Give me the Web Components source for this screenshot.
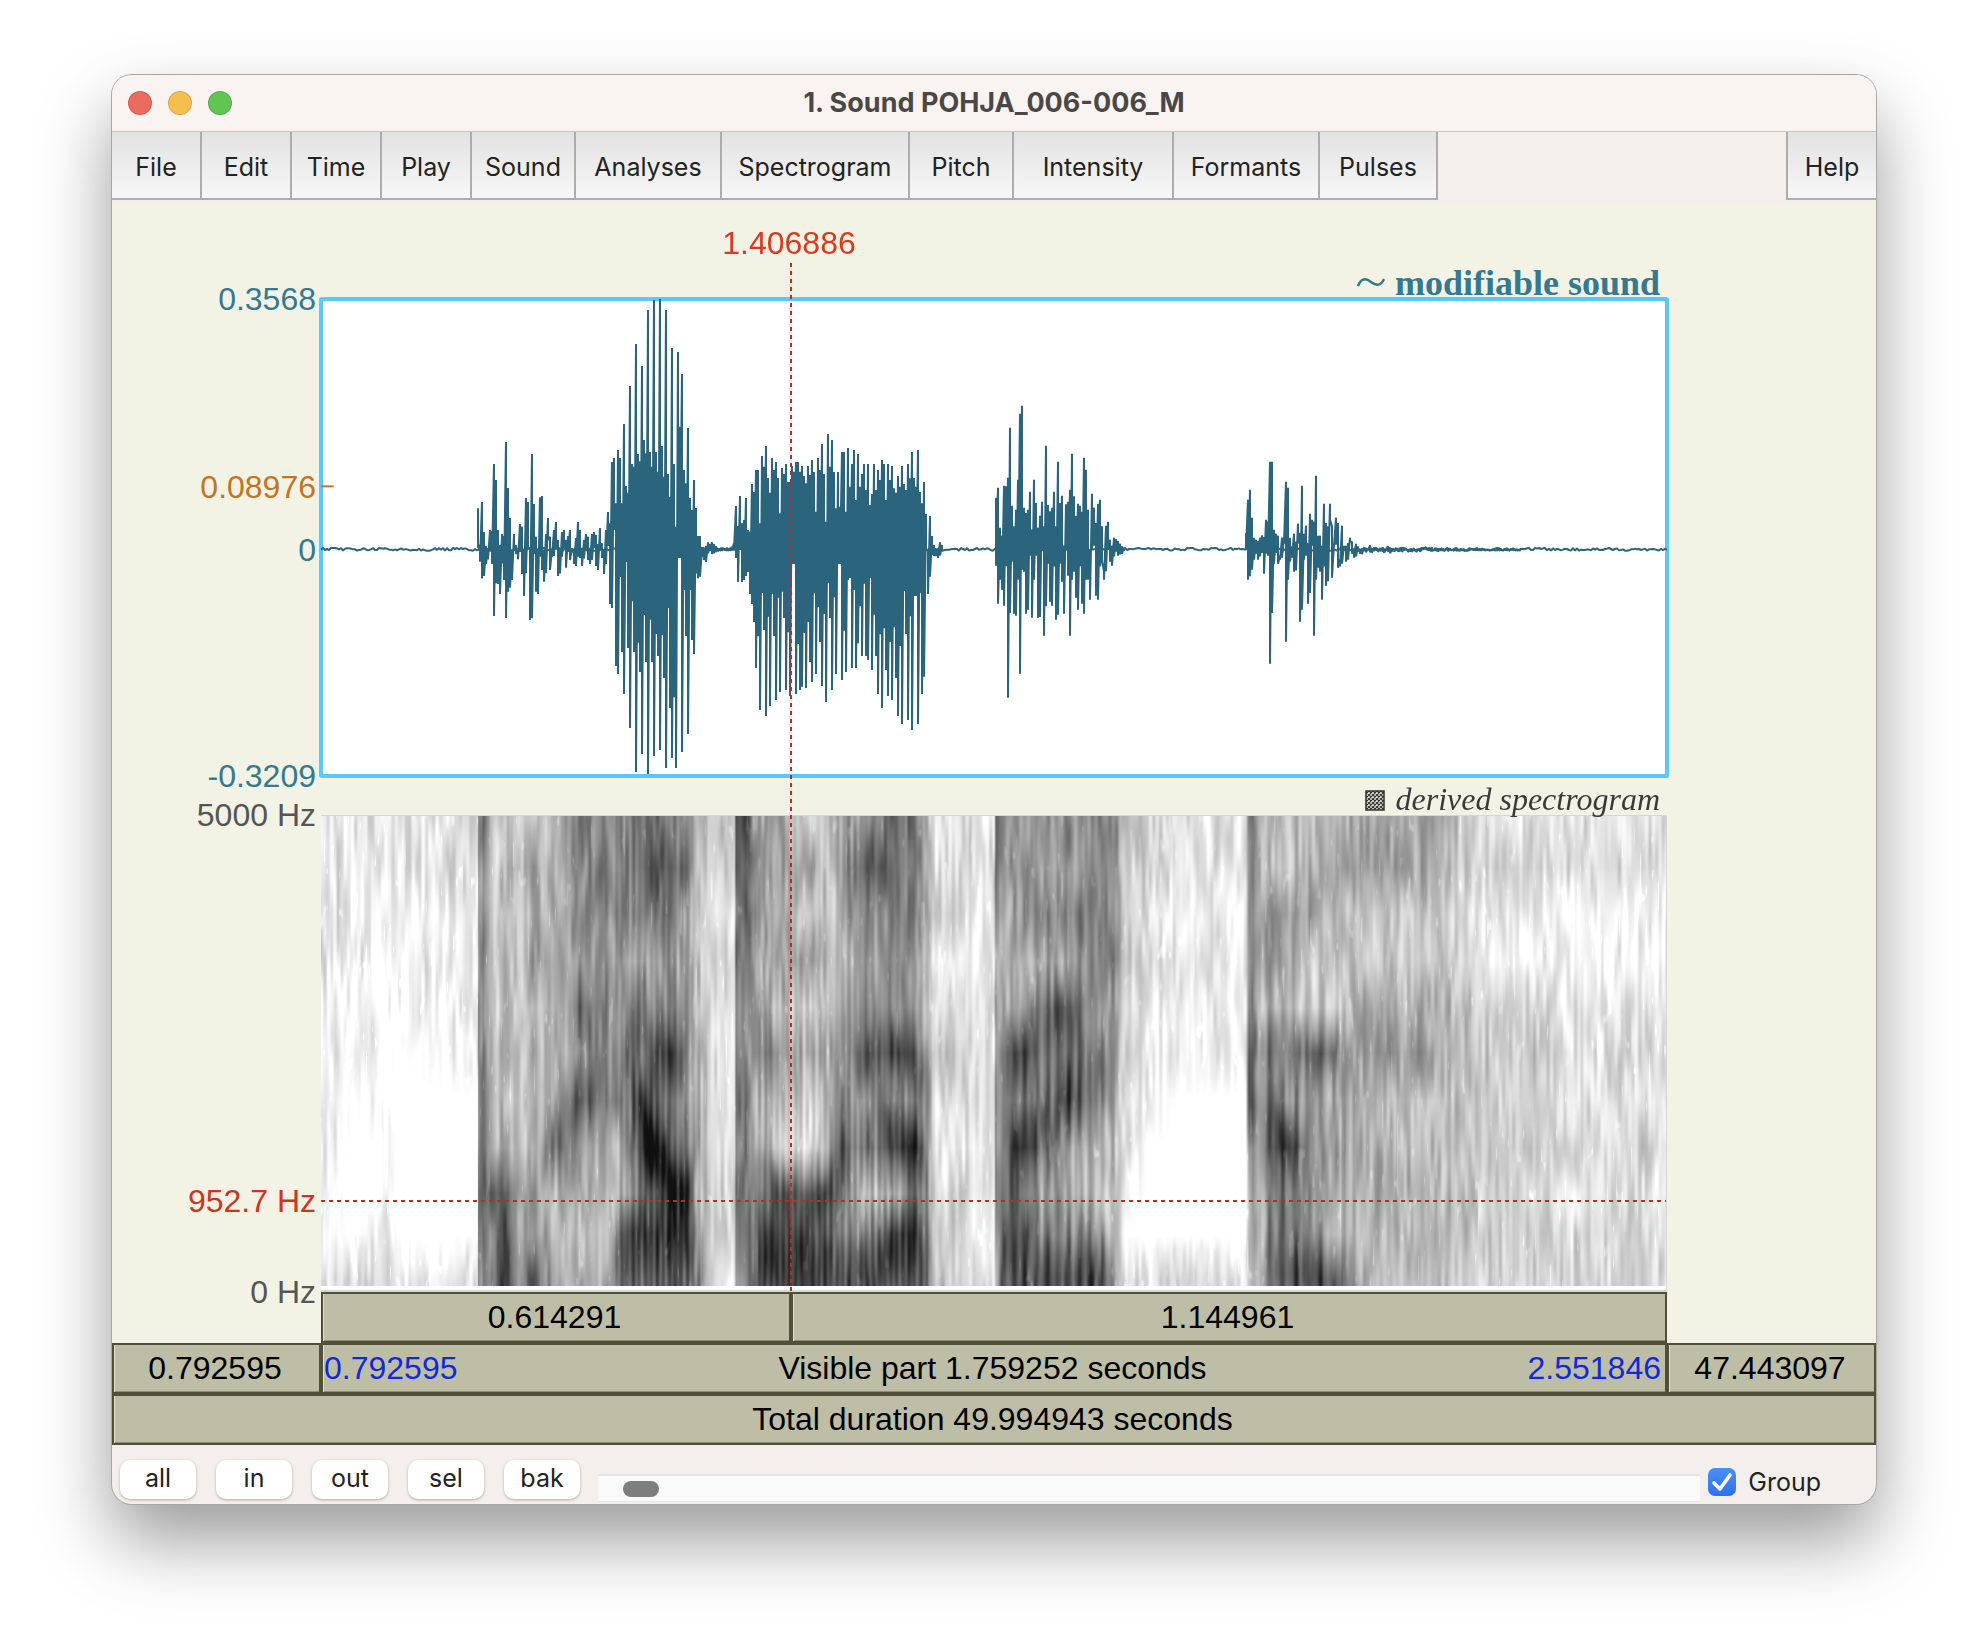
<!DOCTYPE html>
<html lang="en">
<head>
<meta charset="utf-8">
<title>1. Sound POHJA_006-006_M</title>
<style>
body{
    margin: 0;
    padding: 75px 112px 148px;
    background-color: white;
    font-family: Inter, "Liberation Sans", sans-serif;
}
</style>
</head>
<body>
<editor-window name="1. Sound POHJA_006-006_M">
    <menu-bar slot="menu">
        <menu-button style="--width:90px">File</menu-button>
        <menu-button style="--width:90px">Edit</menu-button>
        <menu-button style="--width:90px">Time</menu-button>
        <menu-button style="--width:90px">Play</menu-button>
        <menu-button style="--width:104px">Sound</menu-button>
        <menu-button style="--width:146px">Analyses</menu-button>
        <menu-button style="--width:188px">Spectrogram</menu-button>
        <menu-button style="--width:104px">Pitch</menu-button>
        <menu-button style="--width:160px">Intensity</menu-button>
        <menu-button style="--width:146px">Formants</menu-button>
        <menu-button style="--width:118px">Pulses</menu-button>
        <menu-button slot="help" last style="--width:90px">Help</menu-button>
    </menu-bar>
    <sound-area></sound-area>
    <control-bar slot="controls"></control-bar>
</editor-window>

<script>
function makeTemplate(html){
    const template=document.createElement('template');
    template.innerHTML=html;
    return template;
}

// Base class, clones the template in an open shadow root
class BaseElement extends HTMLElement{
    constructor(template){
        super();
        this.attachShadow({mode:'open'});
        this.shadowRoot.appendChild(template.content.cloneNode(true))
    }
}

// WINDOW
const windowTemplate=makeTemplate(`
<style>
:host{
    display: block;
    overflow: hidden;
    border-radius: 20px;
    background-color: #f4efed;
    box-shadow: 0 0 0 1px #a9a7a6, 0 36px 72px rgba(0,0,0,0.4);
}
header{
    display: grid;
    grid-template-columns: 1fr auto 1fr;
    align-items: center;
    height: 57px;
    background-color: #f9f4f1;
    border-bottom: 1px solid #c8c4c2;
    box-sizing: border-box;
}
.lights{
    display: flex;
    gap: 16px;
    padding-left: 16px;
}
.lights button{
    width: 24px;
    height: 24px;
    padding: 0;
    border: 1px solid rgba(0,0,0,0.12);
    border-radius: 50%;
}
.close{ background-color: #ec6a5e; }
.minimize{ background-color: #f4bf4f; }
.zoom{ background-color: #61c554; }
h1{
    margin: 0;
    font-size: 27px;
    line-height: 32px;
    font-weight: 700;
    color: #4a4847;
}
</style>
<header>
    <div class="lights">
        <button class="close" aria-label="Close"></button>
        <button class="minimize" aria-label="Minimize"></button>
        <button class="zoom" aria-label="Zoom"></button>
    </div>
    <h1></h1>
</header>
<slot name="menu"></slot>
<slot></slot>
<slot name="controls"></slot>
`)

class EditorWindow extends BaseElement{
    constructor(){
        super(windowTemplate);
        this.shadowRoot.querySelector('h1').innerText=this.getAttribute('name')
    }
}

// MENU
const menuBarTemplate=makeTemplate(`
<style>
:host{
    display: flex;
    justify-content: space-between;
    padding-bottom: 4px;
}
nav{
    display: flex;
}
</style>
<nav><slot></slot></nav>
<nav><slot name="help"></slot></nav>
`)

class MenuBar extends BaseElement{
    constructor(){
        super(menuBarTemplate);
    }
}

const menuButtonTemplate=makeTemplate(`
<style>
:host{
    display: block;
    width: var(--width);
}
button{
    box-sizing: border-box;
    width: 100%;
    height: 68px;
    padding: 3px 0 0;
    border: 0 solid #adadad;
    border-width: 0 2px 2px 0;
    background: linear-gradient(#e2e2e2,#f7f7f7);
    font-family: inherit;
    font-size: 25px;
    color: #222;
    white-space: nowrap;
}
:host([last]) button{
    border-width: 0 0 2px 2px;
}
</style>
<button><slot></slot></button>
`)

class MenuButton extends BaseElement{
    constructor(){
        super(menuButtonTemplate);
    }
}

// VALUE AXIS, the gaps between the labels follow the values
const axisTemplate=makeTemplate(`
<style>
:host{
    display: flex;
    flex-direction: column;
    padding-right: 5px;
}
span{
    display: flex;
    align-items: center;
    justify-content: flex-end;
    height: 0;
    line-height: 32px;
    white-space: nowrap;
}
</style>
`)

class ValueAxis extends BaseElement{
    constructor(){
        super(axisTemplate);
    }
    connectedCallback(){
        const labels=this.getAttribute('labels').split(',')
        const colors=this.getAttribute('colors').split(',')
        labels.forEach((text,i)=>{
            if(i>0){
                const gap=document.createElement('div')
                gap.style.flex=`${Math.abs(parseFloat(labels[i-1])-parseFloat(text))*1000} 0 0px`
                this.shadowRoot.appendChild(gap)
            }
            const label=document.createElement('span')
            label.textContent=text
            label.style.color=colors[i]
            this.shadowRoot.appendChild(label)
        })
    }
}

// WAVEFORM
// Every burst is a list of top,bottom pairs, one for each column of the plot
const STEP=6;
const ZERO=752;
const bursts=[
{x:471,zero:779,data:`655,775 765,815 636,865 726,858 768,822 774,808 720,785 723,822 522,978 570,880 720,882 765,912
732,820 738,870 456,984 594,905 684,893 778,870 732,780 765,792 780,808 702,786 710,852 778,918 624,850 636,774 774,990
492,985 642,792 740,905 775,912 622,800 618,840 779,875 732,850 684,750 740,840 778,800 720,798 696,775 750,858 779,850
726,800 720,774 750,833 738,786 720,810 774,786 779,822 744,828 696,800 720,804 774,828 750,805 732,780 740,810 774,822
732,810 726,774 735,828 762,840 714,778 760,804 779,852 720,822 666,768 700,942 516,954 504,720 640,1128 480,1152
504,735 640,1086 402,1212 588,760 608,1074 288,1314 522,860 530,1086 162,1446 492,930 514,1146 228,1392 450,880
490,1116 60,1452 486,930 530,1116 30,1398 486,960 545,1098 24,1380 468,880 560,1164 60,1434 552,940 620,1254 174,1404
522,950 710,1434 186,804 410,804 252,1386 540,880 580,1038 414,1332 624,880 660,1050 570,1092 654,850 738,865 738,860
776,800 776,810 768,816 757,790 762,782 757,792 762,790 768,786 774,784 776,782 777,782 775,781 776,782 777,783 774,781
770,780 760,779 648,804 708,876 618,780 700,876 690,870 624,858 720,846 725,912 582,942 606,996 540,1134
540,900 700,1260 498,905 530,1020 468,1278 564,900 608,1248 504,910 540,1038 516,1230 564,910 670,1206 534,905 552,984
522,1200 576,910 576,1218 528,822 545,822 516,1212 516,890 545,1200 528,1190 558,876 580,1194 528,900 555,1116
510,1176 546,900 665,1152 504,890 540,1056 462,1188 552,880 695,1236 432,880 530,984 450,1200 546,890 655,1152 546,822
650,822 486,1170 486,880 665,1146 474,870 590,864 522,1134 480,890 630,1134 492,1060 590,846 552,1098 522,860 600,1098
522,1110 645,860 612,1140 522,880 600,1098 540,1212 570,890 510,1254 522,880 630,1140 522,1218 570,900 528,1230
595,860 608,1164 558,1278 590,900 528,1302 582,900 600,1032 522,1290 565,900 486,1320 564,918 590,918 480,1302 606,880
640,1212 576,1160 672,780 780,912 678,860 738,795 765,798 776,798 779,804 757,796 765,785`},
{x:2025,zero:510,data:`354,558 324,672 444,600 468,630 318,678 320,560 294,954 144,700 378,546 440,702 390,708 300,600
102,882 78,570 384,576 400,702 390,690 336,528 450,714 300,600 370,528 444,714 408,712 366,510 440,768 198,680 376,552
395,666 384,678 336,560 440,720 246,705 370,552 348,606 498,702 374,510 366,588 330,768 222,600 350,576 408,654 372,690
378,560 396,672 234,702 270,600 390,600 510,660 342,510 384,498 430,648 372,660 360,560 440,545 575,600 438,575 426,510
480,546 498,558 474,530 478,516 484,528 492,524 500,522 504,514`},
{x:2775,zero:510,data:`460,510 360,600 330,590 414,570 474,540 480,522 484,540 474,530 467,520 472,582 420,522 426,528
246,852 246,700 450,552 462,520 468,552 528,540 474,534 474,492 306,786 324,600 474,546 500,534 462,576 486,572 432,492
460,726 318,690 462,540 438,528 490,672 402,640 420,498 426,768 288,600 468,564 468,576 498,660 372,560 430,618 440,605
372,420 440,594 492,500 414,495 430,564 540,560 438,552 498,504 500,546 490,540 474,486 486,522 510,534 492,530`}
]

function seeded(seed){
    return ()=>{
        seed=(seed*1103515245+12345)&0x7fffffff
        return seed/0x7fffffff
    }
}

const waveTemplate=makeTemplate(`
<style>
:host{
    display: block;
    background-color: white;
    border-radius: 1px;
    box-shadow: 0 0 0 2px #5bc8fb, inset 0 0 0 2px #5bc8fb;
}
svg{
    display: block;
    width: 100%;
    height: 100%;
}
path{
    fill: none;
    stroke: #2b647d;
    stroke-width: 6;
    stroke-linejoin: bevel;
}
.mark{ stroke: #c4741f; }
</style>
<svg viewBox="0 0 4038 1431" preserveAspectRatio="none" aria-hidden="true">
    <path class="mark" d="M0 562H38"/>
    <path class="noise"/>
    <path class="bars"/>
</svg>
`)

class WaveForm extends BaseElement{
    constructor(){
        super(waveTemplate);
    }
    connectedCallback(){
        const random=seeded(7)
        let bars=''
        bursts.forEach(burst=>{
            const pairs=burst.data.trim().split(/\s+/).map(pair=>pair.split(',').map(Number))
            pairs.forEach(([top,bottom],i)=>{
                // columns between two deep pulses reach part of the way down
                const around=Math.min(pairs[i-1]?.[1]??0,pairs[i+1]?.[1]??0)
                if(around>1000&&bottom<around) bottom=Math.round(bottom+(around-bottom)*0.6*random())
                bars+=`${i?'L':'M'}${burst.x+i*STEP} ${top-burst.zero+ZERO}V${bottom-burst.zero+ZERO}`
            })
        })
        // soft tail after the last burst
        for(let x=3111;x<3600;x+=STEP){
            const size=22*Math.exp((3111-x)/320)
            bars+=`L${x} ${Math.round(ZERO+4-size*random())}V${Math.round(ZERO-3+size*random()*0.9)}`
        }
        let noise=`M0 ${ZERO}`
        for(let x=STEP;x<=4038;x+=STEP){
            noise+=`L${x} ${Math.round(ZERO-1+(random()-0.5)*9)}`
        }
        this.shadowRoot.querySelector('.bars').setAttribute('d',bars)
        this.shadowRoot.querySelector('.noise').setAttribute('d',noise)
    }
}

// SPECTROGRAM
// Energy per time slice: x position, then eleven hex levels from 5000 Hz down to 0 Hz
const slices=`0:22221112113 32:22111100003 60:22111110012 66:22111111124 76:22111000002 153:32221100002 156:32221100002
157:88878778988 162:a9999999ab98 169:54444556a76 176:43343345bbb 187:47466766ccc 197:34333434667 212:4768576698b
225:55564557568 241:66766689556 258:9887a8a7546 284:88878885445 296:8896789548a 313:aa96aabb8cb 324:aba799cebdb
334:bba78bbdbdb 351:9b978c9bddb 368:89777879bcb 377:54444555569 387:44333333333 413:33222212331 415:bb998999985
425:dba87788888 433:78a668668ab 448:76676966acc 470:565746549bc 490:47573643abc 507:44454555b9b 521:6766679b98b
536:89878a7957b 557:9b878a9a59c 578:ba988c8c6cb 595:99977b9dacb 606:5665578878a 612:23422432345 649:22212331322
673:22222222223 675:a9878899986 680:8786688899a 689:67666b9ccba 703:78868c9e9bb 721:7686998a77b 747:8797bab768b
767:8888888558b 788:87886775459 797:77786654445 805:43343322103 827:33232210002 859:21121100003 925:22112100002
928:98878bb8766 932:99988cc9866 938:76765777655 952:5587599c9a9 967:4476487c9aa 995:56644a8778b 1015:5654496765a
1031:67445666557 1061:67446755654 1107:76446745555 1130:55335545454 1149:33224444443 1181:23213434333 1236:23112323233
1346:22112223233`.split(/\s+/).map(slice=>{
    const [x,levels]=slice.split(':')
    return {x:Number(x),levels:[...levels].slice(0,11).map(level=>parseInt(level,16))}
})
const rowPositions=[4,51,97,144,191,237,284,331,377,417,464]

// regions with glottal pulses: from, to, period, depth
const pulses=[[296,380,6,1.3],[436,608,6,1.1],[676,795,11,1.5],[940,1020,13,1.5],[160,290,15,0.5]]

// formant tracks: strength, spread, then x,y points
const formants=[
    [1.8,26,[216,361],[241,311],[263,277],[280,266]],
    [3.4,30,[309,280],[318,296],[332,337],[351,364],[376,392]],
    [1.4,26,[300,208],[325,222],[368,251]],
    [1.4,34,[290,430],[376,420]],
    [2.2,24,[432,330],[452,368],[486,388],[505,374],[525,325]],
    [-1,30,[448,300],[470,310],[486,318],[505,310],[519,290]],
    [2.2,34,[430,440],[486,438],[560,438],[612,420]],
    [1.5,28,[526,265],[548,240],[566,226],[585,240],[610,270]],
    [2.4,28,[550,285],[575,316],[608,345]],
    [1.5,30,[682,345],[703,309],[738,288],[769,264],[800,245]],
    [1.4,28,[684,255],[745,199],[800,146]],
    [1.6,34,[676,450],[795,455]],
    [1.5,26,[938,285],[974,330],[990,340]],
    [0.8,24,[927,215],[988,233],[1020,256]],
    [1.5,26,[950,460],[1030,460]]
]

const spectrogramTemplate=makeTemplate(`
<style>
:host{
    display: block;
    box-sizing: border-box;
    position: relative;
    overflow: hidden;
    border: 1px solid #d6d6d6;
    border-width: 1px 1px 2px 0;
    background-color: white;
}
canvas{
    display: block;
    width: 100%;
    height: 470px;
}
.frequency{
    position: absolute;
    left: 0;
    right: 0;
    top: 81%;
    height: 2px;
    background: repeating-linear-gradient(90deg,#c5281c 0 4px,transparent 4px 8px);
}
</style>
<canvas width="1346" height="470"></canvas>
<div class="frequency"></div>
`)

class SpectroGram extends BaseElement{
    constructor(){
        super(spectrogramTemplate);
    }
    connectedCallback(){
        const canvas=this.shadowRoot.querySelector('canvas')
        const context=canvas.getContext('2d')
        const image=context.createImageData(canvas.width,canvas.height)
        const fine=this.makeNoise(5,3.4,40)
        const coarse=this.makeNoise(11,8,60)
        const specks=this.makeNoise(23,3,18)
        const line=this.makeNoise(31,4,900)
        for(let x=0;x<canvas.width;x++){
            const tracks=this.tracksAt(x)
            for(let y=0;y<canvas.height;y++){
                let level=this.energy(x,y)
                for(const [strength,spread,center] of tracks){
                    level+=strength*Math.exp(-(((y-center)/spread)**2))
                }
                const weight=Math.min(1,level)
                level+=weight*((fine(x,y)-0.5)*3.6+(coarse(x,y)-0.5)*1.5+(line(x,y)-0.5)*1.4)
                const speck=specks(x,y)
                if(speck>0.85) level-=(speck-0.85)*14*weight
                for(const [from,to,period,depth] of pulses){
                    if(x>=from&&x<=to){
                        level+=depth*(0.35+0.65*y/canvas.height)*Math.cos(2*Math.PI*x/period)
                    }
                }
                const gray=Math.max(16,Math.min(255,258-level*14.8))
                const i=(y*canvas.width+x)*4
                image.data[i]=image.data[i+1]=image.data[i+2]=gray
                image.data[i+3]=255
            }
        }
        context.putImageData(image,0,0)
    }
    // Strength, spread and height of the formants that cross column x
    tracksAt(x){
        const found=[]
        for(const [strength,spread,...points] of formants){
            const start=points[0][0],end=points[points.length-1][0]
            if(x<start||x>end) continue
            let i=1
            while(points[i][0]<x) i++
            const [ax,ay]=points[i-1],[bx,by]=points[i]
            const fade=Math.min(1,(x-start)/12,(end-x)/12)
            found.push([strength*fade,spread,ay+(by-ay)*(x-ax)/(bx-ax)])
        }
        return found
    }
    // Interpolated level between the slices
    energy(x,y){
        let s=1
        while(s<slices.length-1&&slices[s].x<x) s++
        const a=slices[s-1],b=slices[s]
        const t=Math.max(0,Math.min(1,(x-a.x)/(b.x-a.x)))
        let r=1
        while(r<rowPositions.length-1&&rowPositions[r]<y) r++
        const u=Math.max(0,Math.min(1,(y-rowPositions[r-1])/(rowPositions[r]-rowPositions[r-1])))
        const left=a.levels[r-1]*(1-u)+a.levels[r]*u
        const right=b.levels[r-1]*(1-u)+b.levels[r]*u
        return left*(1-t)+right*t
    }
    makeNoise(seed,width,height){
        const random=seeded(seed)
        const columns=Math.ceil(1346/width)+2
        const rows=Math.ceil(470/height)+3
        const cells=Array.from({length:columns*rows},random)
        // each column gets its own phase, so the streaks do not line up
        const shift=Array.from({length:columns},random)
        const sample=(c,y)=>{
            const v=y/height+shift[c]
            const r=Math.floor(v)
            let f=v-r
            f=f*f*(3-2*f)
            return cells[r*columns+c]*(1-f)+cells[(r+1)*columns+c]*f
        }
        return (x,y)=>{
            const c=Math.floor(x/width)
            let f=x/width-c
            f=f*f*(3-2*f)
            return sample(c,y)*(1-f)+sample(c+1,y)*f
        }
    }
}

// TIME BUTTON
const timeButtonTemplate=makeTemplate(`
<style>
:host{
    display: block;
    min-width: 0;
}
button{
    box-sizing: border-box;
    display: grid;
    grid-template-columns: 1fr auto 1fr;
    align-items: center;
    width: 100%;
    height: 100%;
    padding: 0 4px 1px 1px;
    border: 2px solid #50503a;
    background-color: #bebea6;
    box-shadow: inset 1px 0 0 #e0e0cc, inset 0 -1px 0 #8c8c74;
    font-family: "Liberation Sans", sans-serif;
    font-size: 32px;
    line-height: 36px;
    color: black;
    white-space: nowrap;
}
.start,.end{ color: #1128dc; }
.start{ text-align: left; }
.end{ text-align: right; }
</style>
<button>
    <span class="start"><slot name="start"></slot></span>
    <span><slot></slot></span>
    <span class="end"><slot name="end"></slot></span>
</button>
`)

class TimeButton extends BaseElement{
    constructor(){
        super(timeButtonTemplate);
    }
}

// SOUND AREA
const soundAreaTemplate=makeTemplate(`
<style>
:host{
    display: grid;
    position: relative;
    grid-template-columns: 209px 1fr 209px;
    grid-template-rows: 95px 477px 39px 477px 51px 51px 51px;
    background-color: #f2f3e5;
    font-family: "Liberation Sans", sans-serif;
    font-size: 32px;
}
.title{
    grid-column: 2;
    z-index: 1;
    display: flex;
    align-items: flex-end;
    justify-content: flex-end;
    gap: 10px;
    margin: 0;
    padding-right: 7px;
    font-family: "Liberation Serif", serif;
    font-size: 36px;
    line-height: 32px;
}
.sound{
    grid-row: 1;
    font-weight: bold;
    color: #337991;
}
.derived{
    grid-row: 3;
    font-size: 32px;
    font-weight: normal;
    font-style: italic;
    color: #3a3a3a;
}
.title svg{
    display: block;
    height: 32px;
}
value-axis{ grid-column: 1; }
wave-form,spectro-gram{ grid-column: 2; }
.row2{ grid-row: 2; }
.row4{ grid-row: 4; }
.selection{
    grid-row: 5;
    grid-column: 2;
    display: flex;
}
.before{ flex: 614291 0 0px; }
.after{ flex: 1144961 0 0px; }
.left{ grid-area: 6/1; }
.visible{ grid-area: 6/2; }
.right{ grid-area: 6/3; }
.total{ grid-area: 7/1/8/4; }
/* cursor lies over both plots */
.cursor{
    grid-area: 1/2/5/3;
    position: relative;
    z-index: 2;
    pointer-events: none;
}
.cursor span{
    position: absolute;
    left: 34.918%;
    top: 21px;
    padding-right: 4px;
    transform: translateX(-50%);
    line-height: 36px;
    color: #d93a20;
}
.cursor div{
    position: absolute;
    left: 34.918%;
    top: 59px;
    bottom: 0;
    width: 2px;
    margin-left: -1px;
    background: repeating-linear-gradient(#c5281c 0 4px,transparent 4px 8px);
}
</style>
<h2 class="title sound">
    <svg width="28" height="32" viewBox="0 0 28 32" aria-hidden="true"><path d="M1 19C4 11 9 11 14 15S24 19 27 12" fill="none" stroke="#337991" stroke-width="2.5"/></svg>
    <span>modifiable sound</span>
</h2>
<value-axis class="row2" labels="0.3568,0.08976,0,-0.3209" colors="#337991,#c4741f,#337991,#337991"></value-axis>
<wave-form class="row2"></wave-form>
<h2 class="title derived">
    <svg width="20" height="32" viewBox="0 0 20 32" aria-hidden="true">
        <defs><pattern id="hatch" width="4" height="4" patternUnits="userSpaceOnUse"><path d="M0 0L4 4M4 0L0 4" stroke="#333" stroke-width="1.2"/></pattern></defs>
        <rect x="1" y="8" width="18" height="19" fill="url(#hatch)" stroke="#333" stroke-width="1.5"/>
    </svg>
    <span>derived spectrogram</span>
</h2>
<value-axis class="row4" labels="5000 Hz,952.7 Hz,0 Hz" colors="#555,#cc3520,#555"></value-axis>
<spectro-gram class="row4"></spectro-gram>
<div class="selection">
    <time-button class="before">0.614291</time-button>
    <time-button class="after">1.144961</time-button>
</div>
<time-button class="left">0.792595</time-button>
<time-button class="visible"><span slot="start">0.792595</span>Visible part 1.759252 seconds<span slot="end">2.551846</span></time-button>
<time-button class="right">47.443097</time-button>
<time-button class="total">Total duration 49.994943 seconds</time-button>
<div class="cursor"><span>1.406886</span><div></div></div>
`)

class SoundArea extends BaseElement{
    constructor(){
        super(soundAreaTemplate);
    }
}

// CONTROLS
const controlBarTemplate=makeTemplate(`
<style>
:host{
    display: flex;
    align-items: center;
    gap: 20px;
    padding: 15px 55px 5px 8px;
    font-size: 25px;
    color: #222;
}
button{
    width: 76px;
    height: 39px;
    padding: 0 0 4px;
    border: none;
    border-radius: 10px;
    background-color: white;
    box-shadow: 0 1px 3px rgba(0,0,0,0.28);
    font-family: inherit;
    font-size: 25px;
    color: #222;
}
input[type=range]{
    appearance: none;
    flex: 1;
    align-self: flex-end;
    box-sizing: border-box;
    min-width: 0;
    height: 28px;
    margin: 0 0 -3px -2px;
    border: solid #e6e6e8;
    border-width: 2px 0 1px;
    background-color: #fafafa;
}
input[type=range]::-webkit-slider-thumb{
    appearance: none;
    width: 36px;
    height: 16px;
    border-radius: 8px;
    background-color: #7e7e7e;
}
label{
    display: flex;
    align-items: center;
    gap: 12px;
    margin: 4px 0 0 -12px;
}
.box{
    display: grid;
}
.box > *{
    grid-area: 1/1;
}
input[type=checkbox]{
    appearance: none;
    width: 28px;
    height: 28px;
    margin: 0;
    border-radius: 7px;
}
input[type=checkbox]:checked{
    background: linear-gradient(#4a90f7,#2f70f2);
}
svg{ pointer-events: none; }
</style>
<button>all</button>
<button>in</button>
<button>out</button>
<button>sel</button>
<button>bak</button>
<input type="range" min="0" max="1000" value="23" aria-label="Scroll">
<label>
    <span class="box">
        <input type="checkbox" checked>
        <svg width="28" height="28" viewBox="0 0 28 28"><path d="M6 15L12 21L22 7" fill="none" stroke="white" stroke-width="3.6" stroke-linecap="round" stroke-linejoin="round"/></svg>
    </span>
    Group
</label>
`)

class ControlBar extends BaseElement{
    constructor(){
        super(controlBarTemplate);
    }
}

window.customElements.define('menu-button',MenuButton)
window.customElements.define('menu-bar',MenuBar)
window.customElements.define('value-axis',ValueAxis)
window.customElements.define('wave-form',WaveForm)
window.customElements.define('spectro-gram',SpectroGram)
window.customElements.define('time-button',TimeButton)
window.customElements.define('sound-area',SoundArea)
window.customElements.define('control-bar',ControlBar)
window.customElements.define('editor-window',EditorWindow)
</script>
</body>
</html>
